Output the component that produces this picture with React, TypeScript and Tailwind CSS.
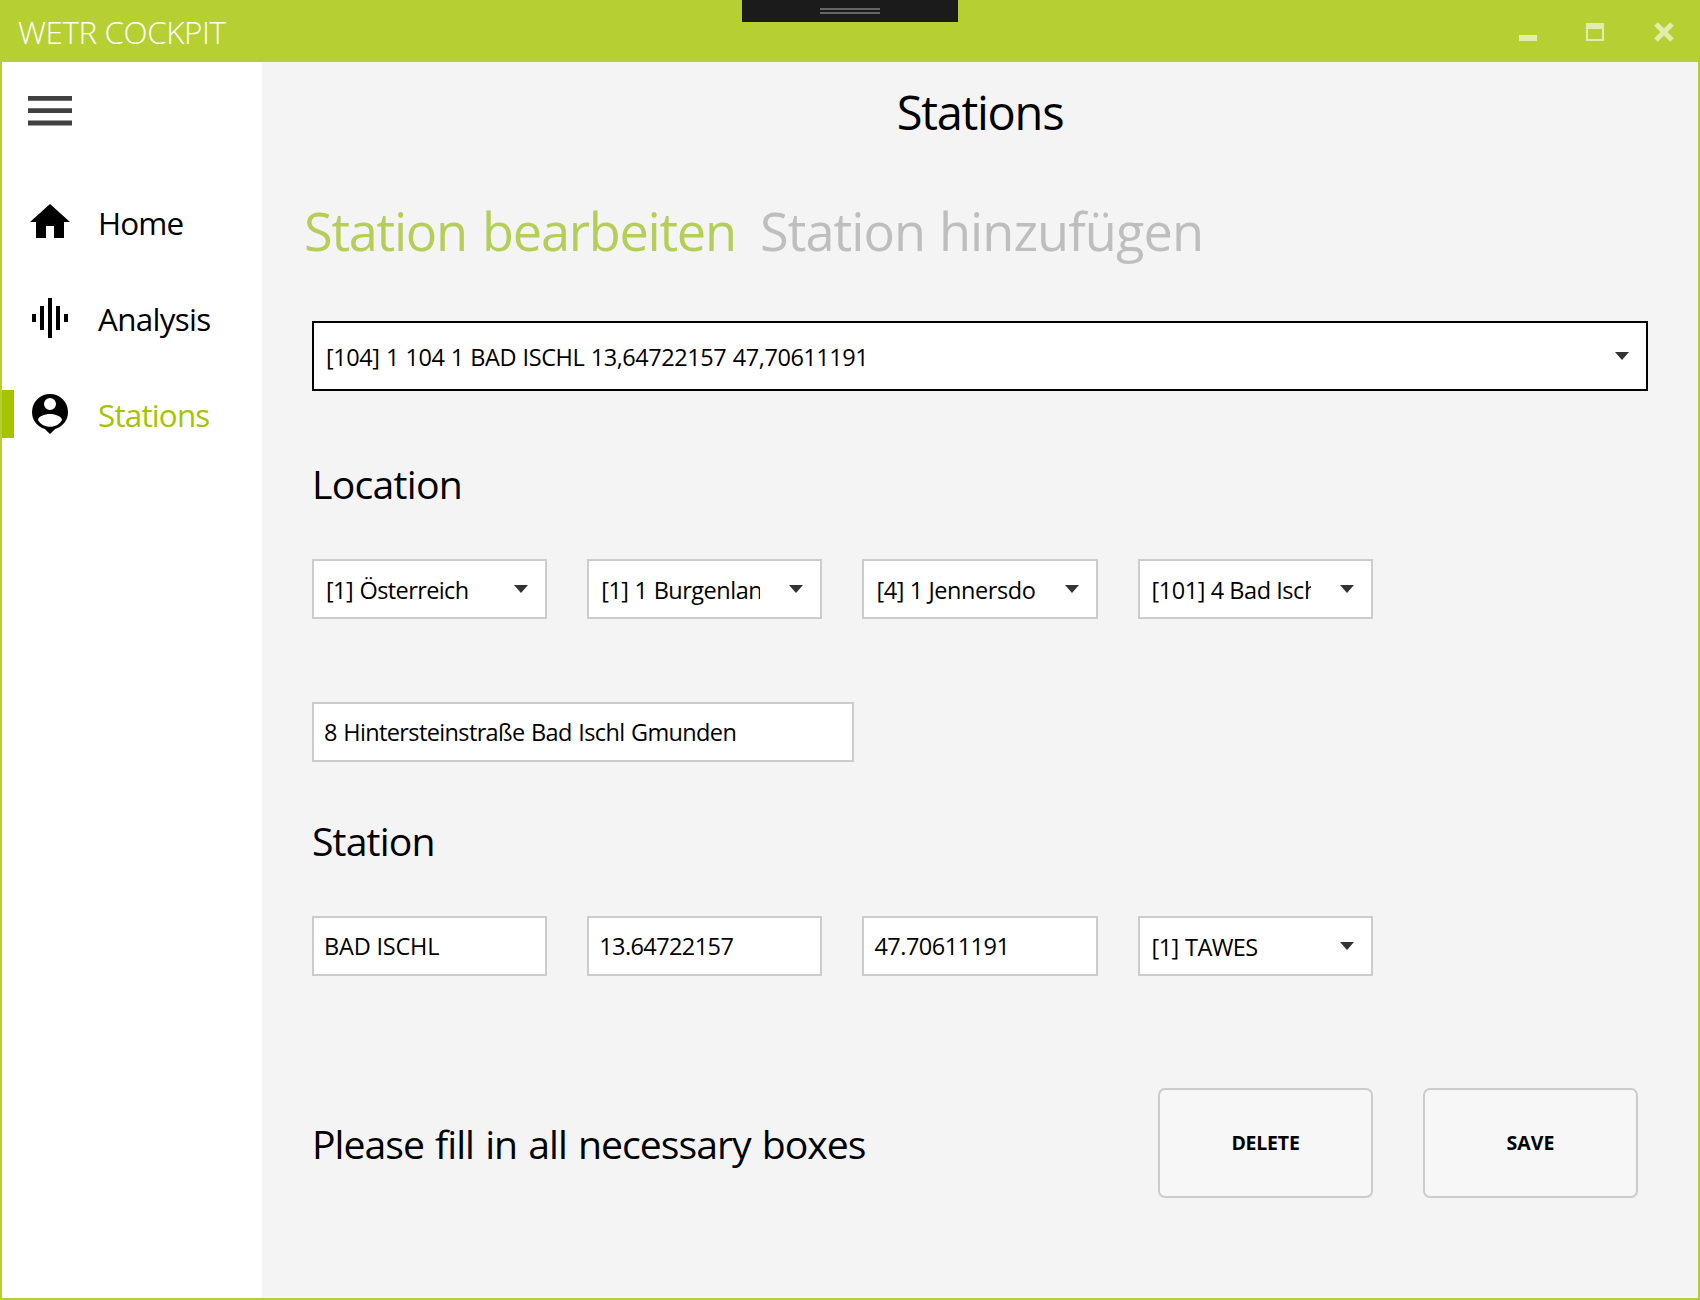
import type { ReactNode } from 'react';
import clsx from 'clsx';

function Arrow() {
  return (
    <svg className="ml-auto h-[8px] w-[14px] shrink-0" viewBox="0 0 14 8" fill="#333333">
      <path d="M0 0H14L7 8Z" />
    </svg>
  );
}

function Select({ children, className, large }: { children: ReactNode; className?: string; large?: boolean }) {
  return (
    <button
      className={clsx(
        'flex items-center border-2 bg-white pr-[17px] pl-3 text-left',
        large ? 'h-[70px] w-full border-black' : 'h-[60px] border-[#cccccc]',
      )}
    >
      <span
        className={clsx(
          'overflow-hidden pt-[2px] text-[23.5px] leading-9 whitespace-nowrap',
          large ? 'flex-1' : 'w-[159px]',
          className,
        )}
      >
        {children}
      </span>
      <Arrow />
    </button>
  );
}

function Field({ children, className }: { children: ReactNode; className?: string }) {
  return (
    <div
      className={clsx(
        'flex h-[60px] items-center border-2 border-[#cccccc] bg-white pt-[2px] pl-[10px] text-[23.5px] whitespace-nowrap',
        className,
      )}
    >
      {children}
    </div>
  );
}

function NavItem({ icon, label, active, className }: { icon: ReactNode; label: string; active?: boolean; className: string }) {
  return (
    <li className="flex h-24 items-center">
      <span className={clsx('h-12 w-3', active && 'bg-[#a4c400]')} />
      <svg className="ml-3 size-12" viewBox="0 0 24 24" fill="#000000">
        {icon}
      </svg>
      <span className={clsx('ml-6 pt-[2px] text-[31.4px]', active && 'text-[#a4c400]', className)}>{label}</span>
    </li>
  );
}

function ActionButton({ children, className }: { children: ReactNode; className?: string }) {
  return (
    <button
      className={clsx(
        'h-[110px] w-[215px] rounded-[7px] border-2 border-[#cccccc] bg-[#f7f7f7] text-[19.5px] font-bold',
        className,
      )}
    >
      {children}
    </button>
  );
}

export default function App() {
  return (
    <div className="flex h-[1300px] w-[1700px] flex-col border-2 border-t-0 border-[#b6d033] bg-[#f4f4f4] font-['Open_Sans','Noto_Sans',sans-serif] text-black">
      <header className="relative flex h-[62px] shrink-0 items-center bg-[#b6d033] pr-[24px] pl-4">
        <span className="pt-[2px] text-[31.4px] font-light tracking-[-0.42px] text-white">WETR COCKPIT</span>
        <div className="absolute top-0 left-[740px] flex h-[22px] w-[216px] flex-col items-center gap-[2px] bg-[#1b1b1b] pt-2">
          <span className="h-[2px] w-[60px] bg-[#666666]" />
          <span className="h-[2px] w-[60px] bg-[#666666]" />
        </div>
        <div className="ml-auto flex items-center pt-[2px]">
          <span className="mt-[12px] h-[6px] w-[18px] bg-[#e2edad]" />
          <span className="ml-[49px] h-[18px] w-[18px] border-2 border-t-[6px] border-[#e2edad]" />
          <svg className="ml-[50px] h-[20px] w-[20px]" viewBox="0 0 20 20" fill="none" stroke="#e2edad" strokeWidth="5">
            <path d="M2 2L18 18M18 2L2 18" />
          </svg>
        </div>
      </header>

      <div className="flex flex-1">
        <aside className="w-[260px] bg-white pt-[34px]">
          <svg className="ml-[26px] h-[30px] w-[44px]" viewBox="0 0 44 30" fill="#404040">
            <path d="M0 0H44V4.8H0ZM0 12.2H44V17H0ZM0 24.4H44V29.4H0Z" />
          </svg>
          <ul className="mt-[48px]">
            <NavItem
              label="Home"
              className="tracking-[-0.85px]"
              icon={<path d="M10 20V14H14V20H19V12H22L12 3L2 12H5V20H10Z" />}
            />
            <NavItem
              label="Analysis"
              className="tracking-[-0.7px]"
              icon={<path d="M3 10H5V14H3ZM7 6H9V18H7ZM11 2H13V22H11ZM15 6H17V18H15ZM19 10H21V14H19Z" />}
            />
            <NavItem
              label="Stations"
              active
              className="tracking-[-0.82px]"
              icon={
                <path
                  fillRule="evenodd"
                  d="M12 2A9 9 0 0 1 21 11C21 15.2 18.3 18.4 14.6 19.5L12 22L9.4 19.5C5.7 18.4 3 15.2 3 11A9 9 0 0 1 12 2ZM12 4A3 3 0 1 0 12 10A3 3 0 1 0 12 4ZM12 12C9.4 12 6 13.2 6 15C7.2 17.2 9.4 18.4 12 18.4C14.6 18.4 16.8 17.2 18 15C18 13.2 14.6 12 12 12Z"
                />
              }
            />
          </ul>
        </aside>

        <main className="flex-1 px-[50px]">
          <h1 className="flex h-[98px] items-center justify-center pt-[2px] text-[47px] tracking-[-1.28px]">Stations</h1>
          <div className="-ml-2 flex h-[140px] items-center pt-[2px] text-[52.3px] whitespace-nowrap">
            <span className="w-[456px] tracking-[-1.28px] text-[#b5ce58] [word-spacing:3px]">Station bearbeiten</span>
            <span className="tracking-[-0.93px] text-[#bebebe] [word-spacing:1px]">Station hinzufügen</span>
          </div>
          <div className="pt-[21px]">
            <Select large className="tracking-[-0.44px] [word-spacing:0.8px]">
              [104] 1 104 1 BAD ISCHL 13,64722157 47,70611191
            </Select>
          </div>

          <h2 className="flex h-[168px] items-center pt-[19px] text-[39.2px] tracking-[-0.75px]">Location</h2>
          <div className="grid w-[1060.8px] grid-cols-4 gap-10">
            <Select className="tracking-[-0.6px] [word-spacing:1px]">[1] Österreich</Select>
            <Select className="tracking-[-0.5px] [word-spacing:0.5px]">[1] 1 Burgenland</Select>
            <Select className="tracking-[-0.41px]">[4] 1 Jennersdorf</Select>
            <Select className="tracking-[-0.45px]">[101] 4 Bad Ischl</Select>
          </div>
          <Field className="mt-[83px] w-[542px] tracking-[-0.63px] [word-spacing:1px]">8 Hintersteinstraße Bad Ischl Gmunden</Field>

          <h2 className="flex h-[154px] items-center pt-1 text-[39.2px] tracking-[-0.88px]">Station</h2>
          <div className="grid w-[1060.8px] grid-cols-4 gap-10">
            <Field className="tracking-[-0.2px]">BAD ISCHL</Field>
            <Field className="tracking-[-0.59px]">13.64722157</Field>
            <Field className="tracking-[-0.5px]">47.70611191</Field>
            <Select className="tracking-[-0.6px] [word-spacing:1px]">[1] TAWES</Select>
          </div>

          <div className="mt-28 flex h-[110px] items-center">
            <p className="pt-[2px] text-[39.2px] tracking-[-1px] [word-spacing:2px]">Please fill in all necessary boxes</p>
            <div className="mr-[10px] ml-auto flex gap-[50px]">
              <ActionButton className="tracking-[-0.22px]">DELETE</ActionButton>
              <ActionButton>SAVE</ActionButton>
            </div>
          </div>
        </main>
      </div>
    </div>
  );
}
